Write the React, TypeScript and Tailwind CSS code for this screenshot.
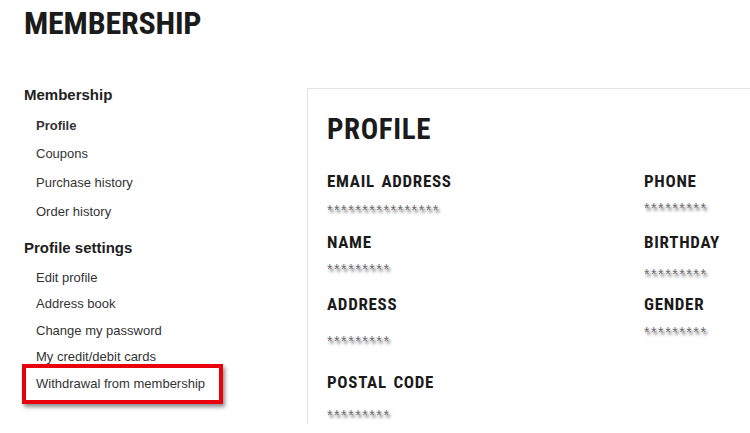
import React from "react";

const cond: React.CSSProperties = { fontFamily: "Roboto, 'Liberation Sans', sans-serif", fontStretch: "condensed" };
const arial: React.CSSProperties = { fontFamily: "'Liberation Sans', Arial, sans-serif" };

function Label({ children }: { children: React.ReactNode }) {
  return (
    <div className="text-[17px] h-[17px] font-bold text-[#1b1b1b] leading-none tracking-[0.7px] [word-spacing:2px] whitespace-nowrap" style={cond}>
      {children}
    </div>
  );
}

function Value({ children, className }: { children: React.ReactNode; className: string }) {
  return (
    <div
      className={`text-[14px] h-[12px] text-[#6a6a6a] leading-[12px] tracking-[1.6px] [text-shadow:2px_3px_3px_rgba(0,0,0,0.55)] whitespace-nowrap ${className}`}
      style={arial}
    >
      {children}
    </div>
  );
}

export default function App() {
  const item = "text-[13px] text-[#333] leading-[28.67px] h-[28.67px] pl-[12px] whitespace-nowrap";
  const item2 = "text-[13px] text-[#333] leading-[26.5px] h-[26.5px] pl-[12px] whitespace-nowrap";
  return (
    <div className="w-[750px] h-[433px] bg-white overflow-hidden" style={arial}>
      <h1 className="text-[32px] h-[32px] font-bold text-[#1b1b1b] leading-none pl-[24px] mt-[7px] tracking-[-0.2px]" style={cond}>
        MEMBERSHIP
      </h1>
      <div className="flex mt-[49px]">
        <div className="w-[307px] shrink-0 pl-[24px] flex flex-col">
          <div className="text-[15px] font-bold text-[#222] leading-[14px] h-[14px] whitespace-nowrap">Membership</div>
          <div className="flex flex-col mt-[9.67px]">
            <div className={`${item} font-bold`}>Profile</div>
            <div className={item}>Coupons</div>
            <div className={item}>Purchase history</div>
            <div className={item}>Order history</div>
          </div>
          <div className="text-[15px] font-bold text-[#222] leading-[14px] h-[14px] mt-[14.67px] whitespace-nowrap">Profile settings</div>
          <div className="flex flex-col mt-[9.75px]">
            <div className={item2}>Edit profile</div>
            <div className={item2}>Address book</div>
            <div className={item2}>Change my password</div>
            <div className={item2}>My credit/debit cards</div>
            <div className="-ml-[2px] mt-[-6.75px] w-[201px] h-[40px] border-[4px] border-[#e8000b] shadow-[2px_3px_4px_rgba(0,0,0,0.45)] flex items-center pl-[10px] text-[13px] text-[#333] leading-none whitespace-nowrap">
              Withdrawal from membership
            </div>
          </div>
        </div>
        <div className="flex-1 border-l border-t border-[#e3e3e3] h-[336px] pl-[19px] pt-[26px]">
          <div className="text-[29px] h-[29px] font-bold text-[#1b1b1b] leading-none tracking-[0.6px]" style={cond}>
            PROFILE
          </div>
          <div className="flex mt-[28.6px]">
            <div className="w-[317px] shrink-0 flex flex-col">
              <Label>EMAIL ADDRESS</Label>
              <Value className="mt-[14.6px]">****************</Value>
              <div className="mt-[18.1px]"><Label>NAME</Label></div>
              <Value className="mt-[11.9px]">*********</Value>
              <div className="mt-[20.6px]"><Label>ADDRESS</Label></div>
              <Value className="mt-[22px]">*********</Value>
              <div className="mt-[27.5px]"><Label>POSTAL CODE</Label></div>
              <Value className="mt-[17.9px]">*********</Value>
            </div>
            <div className="flex flex-col">
              <Label>PHONE</Label>
              <Value className="mt-[12.9px]">*********</Value>
              <div className="mt-[19.8px]"><Label>BIRTHDAY</Label></div>
              <Value className="mt-[16.9px]">*********</Value>
              <div className="mt-[15.6px]"><Label>GENDER</Label></div>
              <Value className="mt-[13.7px]">*********</Value>
            </div>
          </div>
        </div>
      </div>
    </div>
  );
}
